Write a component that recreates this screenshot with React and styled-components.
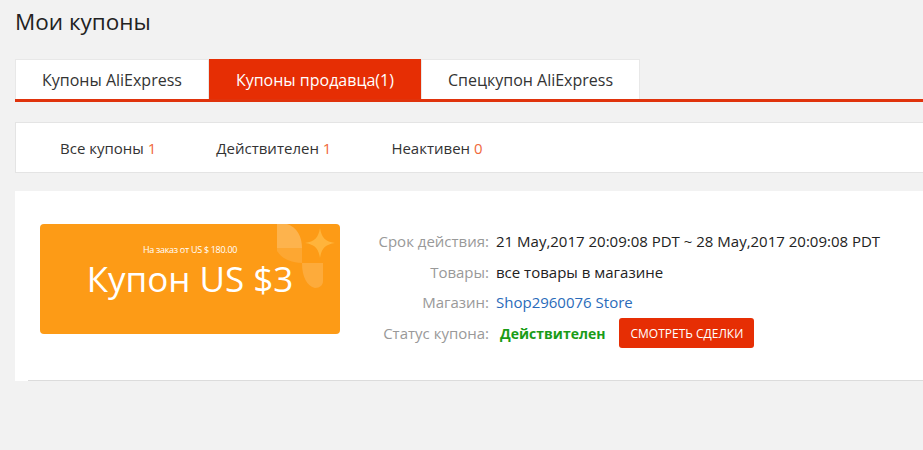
import React from 'react';
import styled, { createGlobalStyle } from 'styled-components';

const GlobalStyle = createGlobalStyle`
  html, body {
    margin: 0;
    padding: 0;
    background: #f2f2f2;
    font-family: "Open Sans", "Noto Sans", Arial, sans-serif;
    color: #333;
    overflow: hidden;
  }
`;

const tabs = [
  { title: 'Купоны AliExpress' },
  { title: 'Купоны продавца(1)', active: true },
  { title: 'Спецкупон AliExpress' },
];

const filters = [
  { title: 'Все купоны', count: 1 },
  { title: 'Действителен', count: 1 },
  { title: 'Неактивен', count: 0 },
];

// leaf + star ornament in the coupon's upper right corner
function CouponDecor() {
  return (
    <Decor width="63" height="66" viewBox="0 0 63 66">
      <path d="M0 0 H10 C20 3 25 13 25 24 H0 Z" fill="#fff" fillOpacity="0.24" />
      <path d="M0 24 H25 V39 C14 39 4 34 0 27 Z" fill="#fff" fillOpacity="0.12" />
      <path d="M25 39 H46 V57 C46 61 43 64 38 64 C30 62 25 53 25 39 Z" fill="#fff" fillOpacity="0.16" />
      <path
        d="M43 4 C44.6 14 48.5 17.5 58 19 C48.5 20.5 44.6 24 43 34 C41.4 24 37.5 20.5 28 19 C37.5 17.5 41.4 14 43 4 Z"
        fill="#ffb43b"
      />
    </Decor>
  );
}

function App() {
  return (
    <Page>
      <GlobalStyle />
      <Title>Мои купоны</Title>

      <TabBar>
        {tabs.map((t) => (
          <Tab key={t.title} active={t.active}>{t.title}</Tab>
        ))}
      </TabBar>

      <FilterBar>
        {filters.map((f) => (
          <FilterItem key={f.title}>
            {f.title} <Count>{f.count}</Count>
          </FilterItem>
        ))}
      </FilterBar>

      <CouponPanel>
        <CouponRow>
          <Coupon>
            <CouponDecor />
            <Condition>На заказ от US $ 180.00</Condition>
            <Amount>Купон US $3</Amount>
          </Coupon>

          <Details>
            <DetailRow>
              <Label>Срок действия:</Label>
              <Value>21 May,2017 20:09:08 PDT ~ 28 May,2017 20:09:08 PDT</Value>
            </DetailRow>
            <DetailRow>
              <Label>Товары:</Label>
              <Value>все товары в магазине</Value>
            </DetailRow>
            <DetailRow>
              <Label>Магазин:</Label>
              <StoreLink href="#">Shop2960076 Store</StoreLink>
            </DetailRow>
            <DetailRow>
              <Label>Статус купона:</Label>
              <Status>Действителен</Status>
              <DealsButton>Смотреть сделки</DealsButton>
            </DetailRow>
          </Details>
        </CouponRow>
      </CouponPanel>
    </Page>
  );
}

const Page = styled.div`
  width: 1100px;
  padding: 7px 0 0 15px;
`;

const Title = styled.h1`
  margin: 0;
  font-size: 22.5px;
  font-weight: 400;
  line-height: 30px;
  color: #222;
`;

const TabBar = styled.div`
  display: flex;
  margin-top: 22px;
  border-bottom: 3px solid #e0330c;
`;

const Tab = styled.div`
  height: 40px;
  line-height: 40px;
  padding: 0 26px;
  font-size: 16px;
  box-sizing: border-box;
  background: ${(p) => (p.active ? '#e62e04' : '#fff')};
  color: ${(p) => (p.active ? '#fff' : '#333')};
  border: 1px solid ${(p) => (p.active ? '#e62e04' : '#e8e8e8')};
  border-bottom: none;
  cursor: pointer;
`;

const FilterBar = styled.div`
  display: flex;
  gap: 60px;
  margin-top: 20px;
  height: 49px;
  align-items: center;
  padding-left: 44px;
  background: #fff;
  border: 1px solid #e4e4e4;
`;

const FilterItem = styled.div`
  font-size: 15px;
  color: #333;
  cursor: pointer;
`;

const Count = styled.span`
  color: #f0683c;
`;

const CouponPanel = styled.div`
  margin-top: 18px;
  background: #fff;
  padding-top: 33px;
`;

const CouponRow = styled.div`
  display: flex;
  align-items: flex-start;
  margin-left: 13px;
  padding: 0 0 36px 12px;
  border-bottom: 1px solid #dcdcdc;
`;

const Coupon = styled.div`
  position: relative;
  overflow: hidden;
  width: 300px;
  height: 110px;
  border-radius: 4px;
  background: #fd9b16;
  color: #fff;
  text-align: center;
  box-sizing: border-box;
  padding-top: 20px;
`;

const Decor = styled.svg`
  position: absolute;
  top: 0;
  left: 237px;
`;

const Condition = styled.div`
  position: relative;
  font-size: 9px;
  line-height: 12px;
  letter-spacing: -0.3px;
`;

const Amount = styled.div`
  position: relative;
  font-size: 35px;
  line-height: 46px;
`;

const Details = styled.div`
  display: flex;
  flex-direction: column;
  gap: 8.7px;
  margin-left: 22px;
  margin-top: 6px;
`;

const DetailRow = styled.div`
  display: flex;
  align-items: center;
  gap: 7px;
  height: 22px;
  font-size: 15px;
  white-space: nowrap;
`;

const Label = styled.span`
  width: 127px;
  text-align: right;
  color: #999;
`;

const Value = styled.span`
  color: #222;
`;

const StoreLink = styled.a`
  color: #2a6bba;
  text-decoration: none;
`;

const Status = styled.span`
  color: #1a9c17;
  font-size: 14px;
  font-weight: 700;
  margin-left: 4px;
`;

const DealsButton = styled.button`
  margin-left: 7px;
  height: 30px;
  padding: 0 11px;
  border: none;
  border-radius: 3px;
  background: #e62e04;
  color: #fff;
  font-family: inherit;
  font-size: 12px;
  text-transform: uppercase;
  cursor: pointer;
`;

export default App;
